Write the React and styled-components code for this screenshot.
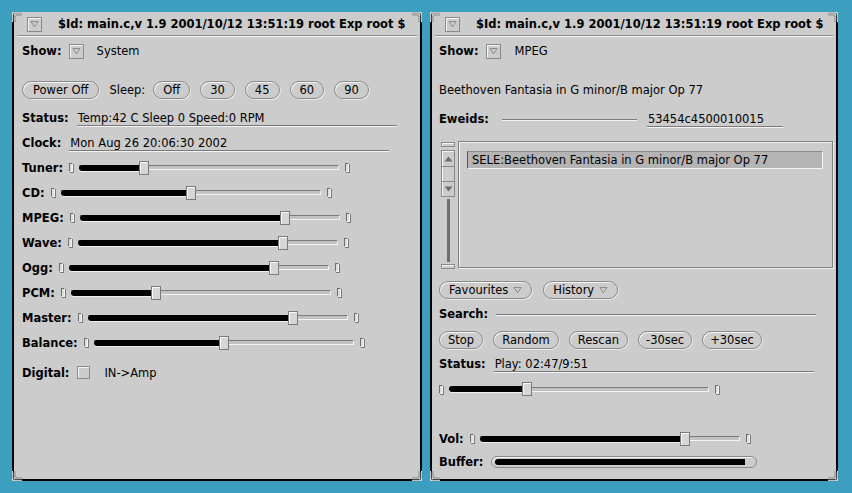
import styled, { createGlobalStyle } from 'styled-components'

const GlobalStyle = createGlobalStyle`
body{margin:0;background:#3c9fc0;font-family:"DejaVu Sans",sans-serif;font-size:11.5px;color:#000;}
*{box-sizing:border-box;}
`;

const Page = styled.div`
display:flex; gap:8px;
padding:12px 0 0 12px;
height:493px;
`;

const Window = styled.div`
position:relative;
width:${p => p.$w}px; height:469px;
background:#cccccc;
border:2px solid #000; border-top:none;
`;

const TitleBar = styled.div`
display:flex; align-items:center; gap:${p => p.$gap}px;
height:24px; margin:0 3px; padding:1px 0 0 ${p => p.$pad}px;
border-bottom:1px solid #8a8a8a;
box-shadow:0 1px 0 #f4f4f4;
font-weight:bold; font-size:11.5px;
white-space:nowrap;
`;

const Body = styled.div`
display:flex; flex-direction:column;
padding:2px 0 0 ${p => p.$pad}px;
`;

const Row = styled.div`
display:flex; align-items:center; gap:${p => p.$gap ?? 8}px;
height:${p => p.$h ?? 25}px; margin-top:${p => p.$mt ?? 0}px;
white-space:nowrap;
`;

const Label = styled.span`
font-weight:bold;
`;

const Text = styled.span`
margin-left:${p => p.$ml ?? 0}px;
`;

const MenuBox = styled.span`
display:inline-flex; align-items:center; justify-content:center;
width:15px; height:15px;
border:1px solid #8a8a8a;
box-shadow:inset 1px 1px 0 #f4f4f4;
background:#cccccc;
`;

const Button = styled.span`
display:inline-flex; align-items:center; gap:5px;
height:18px; padding:0 ${p => p.$px ?? 9}px;
border:1px solid #8a8a8a; border-radius:9px;
box-shadow:inset 1px 1px 0 #f4f4f4, 1px 1px 0 #e6e6e6;
background:#cccccc;
`;

const Buttons = styled.div`
display:flex; align-items:center; gap:10px;
`;

const Field = styled.span`
display:inline-block; width:${p => p.$w}px;
padding-left:1px; line-height:14px;
border-bottom:1px solid #7a7a7a;
box-shadow:0 1px 0 #f4f4f4;
margin-top:2px;
`;

const Check = styled.span`
display:inline-block; width:13px; height:13px;
border:1px solid #8a8a8a;
box-shadow:inset 1px 1px 0 #f4f4f4;
`;

const SliderWrap = styled.div`
display:flex; align-items:center; gap:6px;
`;

const EndCap = styled.span`
display:inline-block; width:4px; height:9px;
border:1px solid #6e6e6e; border-right-color:#f4f4f4; border-bottom-color:#f4f4f4;
background:#dedede;
box-shadow:1px 1px 0 #7a7a7a;
`;

const Track = styled.div`
position:relative; width:260px; height:14px;
display:flex; align-items:center;
`;

const Groove = styled.div`
width:100%; height:5px;
background:#c2c2c2;
border-top:1px solid #7a7a7a; border-bottom:1px solid #f4f4f4; border-right:1px solid #f4f4f4;
`;

const Filled = styled.div`
position:absolute; left:0; top:4px; height:6px;
background:#000; border-radius:3px 0 0 3px;
box-shadow:0 1px 0 #f0f0f0;
`;

const Handle = styled.div`
position:absolute; top:0; width:10px; height:14px;
background:#d6d6d6;
border:1px solid #7a7a7a;
box-shadow:inset 1px 1px 0 #fafafa;
`;

const Corner = styled.svg`
position:absolute; width:10px; height:10px;
${p => p.$pos}
`;

const ListArea = styled.div`
display:flex; gap:3px; height:130px; margin-top:8px; padding-top:2px; padding-right:3px;
`;

const ScrollBar = styled.div`
display:flex; flex-direction:column; align-items:center;
width:14px; padding-top:1px; margin-left:2px;
`;

const ScrollCap = styled.div`
width:14px; height:5px;
border:1px solid #8a8a8a; box-shadow:inset 1px 1px 0 #f4f4f4;
`;

const Elevator = styled.div`
display:flex; flex-direction:column;
width:14px; margin-top:3px;
border:1px solid #8a8a8a; box-shadow:inset 1px 1px 0 #f4f4f4;
`;

const ElevPart = styled.div`
height:15px; display:flex; align-items:center; justify-content:center;
border-top:${p => p.$sep ? '1px solid #8a8a8a' : 'none'};
`;

const Trough = styled.div`
flex:1; width:3px; background:#6e6e6e; margin:2px 0;
`;

const ListPanel = styled.div`
flex:1; height:127px;
border:1px solid #7f7f7f;
box-shadow:inset 1px 1px 0 #f0f0f0, 1px 1px 0 #f0f0f0;
padding:9px 9px 0 8px;
`;

const Selected = styled.div`
height:18px; line-height:16px; padding-left:4px;
background:#b4b4b4;
border:1px solid #f4f4f4; border-left-color:#555; border-top-color:#8a8a8a;
white-space:nowrap;
`;

const Gauge = styled.div`
width:266px; height:12px; padding:2px 11px 2px 3px;
border:1px solid #8a8a8a; border-radius:6px;
box-shadow:inset 1px 1px 0 #f4f4f4;
`;

const GaugeFill = styled.div`
height:6px; background:#000; border-radius:3px 0 0 3px;
`;

const DownTri = ({ fill }) => (
  <svg width="9" height="8" viewBox="0 0 9 8">
    <path d="M1 1.5 H8 L4.5 7 Z" fill={fill || 'none'} stroke="#8a8a8a" strokeWidth="1" />
  </svg>
)

const Arrow = ({ up }) => (
  <svg width="9" height="6" viewBox="0 0 9 6">
    <path d={up ? 'M0.5 5.5 H8.5 L4.5 0.5 Z' : 'M0.5 0.5 H8.5 L4.5 5.5 Z'} fill="#6e6e6e" />
  </svg>
)

const CornerMark = ({ pos }) => (
  <Corner $pos={pos} viewBox="0 0 10 10">
    <path d="M0.5 10 V0.5 H10" fill="none" stroke="#f4f4f4" />
    <path d="M1 9 V2 H2 V1 H10 M3 10 V4 H4 V3 H10" fill="none" stroke="#8a8a8a" />
  </Corner>
)

const Corners = () => (
  <>
    <CornerMark pos="left:-2px;top:0;" />
    <CornerMark pos="right:-2px;top:0;transform:scaleX(-1);" />
    <CornerMark pos="left:-2px;bottom:-2px;transform:scaleY(-1);" />
    <CornerMark pos="right:-2px;bottom:-2px;transform:scale(-1,-1);" />
  </>
)

const Slider = ({ value }) => (
  <SliderWrap>
    <EndCap />
    <Track>
      <Groove />
      <Filled style={{ width: value * 250 + 2 }} />
      <Handle style={{ left: value * 250 }} />
    </Track>
    <EndCap />
  </SliderWrap>
)

const Title = ({ pad }) => (
  <TitleBar $pad={pad} $gap={16}>
    <MenuBox><DownTri /></MenuBox>
    <span>$Id: main.c,v 1.9 2001/10/12 13:51:19 root Exp root $</span>
  </TitleBar>
)

const mixers = [
  ['Tuner:', 0.24], ['CD:', 0.5], ['MPEG:', 0.8], ['Wave:', 0.8],
  ['Ogg:', 0.8], ['PCM:', 0.32], ['Master:', 0.8], ['Balance:', 0.5],
]

const SystemWindow = () => (
  <Window $w={410}>
    <Corners />
    <Title pad={10} />
    <Body $pad={8}>
      <Row $h={26} $gap={0}>
        <Label>Show:</Label>
        <MenuBox style={{ marginLeft: 7 }}><DownTri /></MenuBox>
        <Text $ml={13}>System</Text>
      </Row>
      <Row $mt={13} $gap={10}>
        <Button $px={10}>Power Off</Button>
        <Row $h={18} $gap={8}>
          <Text>Sleep:</Text>
          <Buttons>
            <Button>Off</Button>
            <Button>30</Button>
            <Button>45</Button>
            <Button>60</Button>
            <Button>90</Button>
          </Buttons>
        </Row>
      </Row>
      <Row $mt={3}>
        <Label>Status:</Label>
        <Field $w={320}>Temp:42 C Sleep 0 Speed:0 RPM</Field>
      </Row>
      <Row>
        <Label>Clock:</Label>
        <Field $w={320}>Mon Aug 26 20:06:30 2002</Field>
      </Row>
      {mixers.map(([name, v]) => (
        <Row key={name} $gap={6}>
          <Label>{name}</Label>
          <Slider value={v} />
        </Row>
      ))}
      <Row $mt={5} $gap={0}>
        <Label>Digital:</Label>
        <Check style={{ marginLeft: 8 }} />
        <Text $ml={14}>IN-&gt;Amp</Text>
      </Row>
    </Body>
  </Window>
)

const MpegWindow = () => (
  <Window $w={408}>
    <Corners />
    <Title pad={10} />
    <Body $pad={7}>
      <Row $h={26} $gap={0}>
        <Label>Show:</Label>
        <MenuBox style={{ marginLeft: 7 }}><DownTri /></MenuBox>
        <Text $ml={14}>MPEG</Text>
      </Row>
      <Row $mt={13}>
        <Text>Beethoven Fantasia in G minor/B major Op 77</Text>
      </Row>
      <Row $mt={4} $gap={10}>
        <Label style={{ marginRight: 3 }}>Eweids:</Label>
        <Field $w={135} />
        <Field $w={136}>53454c4500010015</Field>
      </Row>
      <ListArea>
        <ScrollBar>
          <ScrollCap />
          <Elevator>
            <ElevPart><Arrow up /></ElevPart>
            <ElevPart $sep />
            <ElevPart $sep><Arrow /></ElevPart>
          </Elevator>
          <Trough />
          <ScrollCap />
        </ScrollBar>
        <ListPanel>
          <Selected>SELE:Beethoven Fantasia in G minor/B major Op 77</Selected>
        </ListPanel>
      </ListArea>
      <Row $mt={9} $h={23} $gap={11}>
        <Button>Favourites <DownTri /></Button>
        <Button>History <DownTri /></Button>
      </Row>
      <Row>
        <Label>Search:</Label>
        <Field $w={320} />
      </Row>
      <Row $h={23} $mt={2}>
        <Buttons>
          <Button $px={8}>Stop</Button>
          <Button $px={8}>Random</Button>
          <Button $px={8}>Rescan</Button>
          <Button $px={7}>-30sec</Button>
          <Button $px={7}>+30sec</Button>
        </Buttons>
      </Row>
      <Row>
        <Label>Status:</Label>
        <Field $w={320}>Play: 02:47/9:51</Field>
      </Row>
      <Row $h={26}>
        <Slider value={0.29} />
      </Row>
      <Row $mt={24} $gap={6}>
        <Label>Vol:</Label>
        <Slider value={0.8} />
      </Row>
      <Row $h={22} $gap={8}>
        <Label>Buffer:</Label>
        <Gauge><GaugeFill /></Gauge>
      </Row>
    </Body>
  </Window>
)

export default function App() {
  return (
    <>
      <GlobalStyle />
      <Page>
        <SystemWindow />
        <MpegWindow />
      </Page>
    </>
  )
}
